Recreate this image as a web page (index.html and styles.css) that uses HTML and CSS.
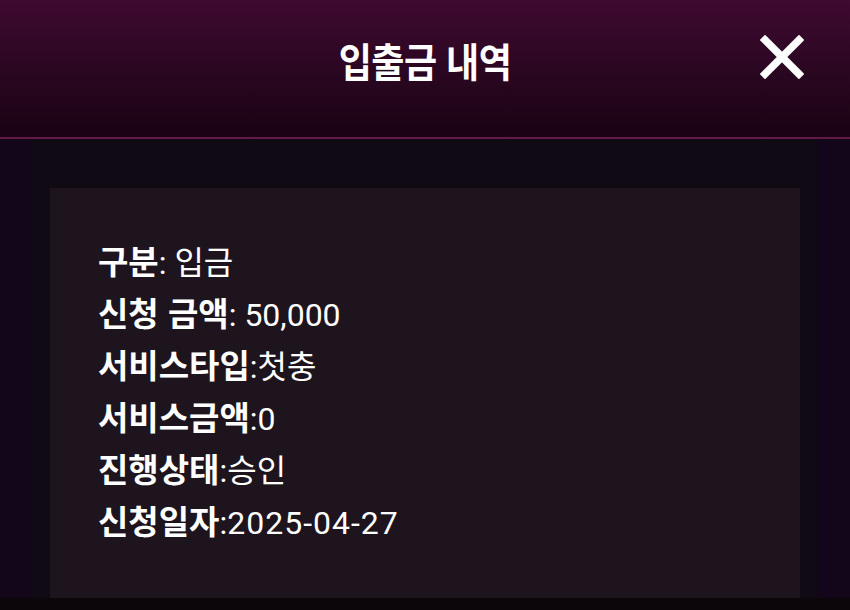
FILE: index.html
```html
<!DOCTYPE html>
<html lang="ko">
<head>
<meta charset="utf-8">
<title>입출금 내역</title>
<link rel="stylesheet" href="styles.css">
</head>
<body>
<div class="modal">
  <header class="modal-head">
    <h1 class="modal-title">입출금 내역</h1>
    <button class="modal-close" type="button" aria-label="닫기">
      <svg viewBox="0 0 44 44" width="44" height="44">
        <path d="M5 5 L39 39 M39 5 L5 39" stroke="#fff" stroke-width="7.5" stroke-linecap="square"/>
      </svg>
    </button>
  </header>
  <main class="modal-body">
    <section class="detail-card">
      <p class="row"><b>구분</b>: 입금</p>
      <p class="row"><b>신청 금액</b>: 50,000</p>
      <p class="row"><b>서비스타입</b>:첫충</p>
      <p class="row"><b>서비스금액</b>:0</p>
      <p class="row"><b>진행상태</b>:승인</p>
      <p class="row"><b>신청일자</b>:<span class="date">2025-04-27</span></p>
    </section>
  </main>
</div>
</body>
</html>
```

FILE: styles.css
```css
html, body {
  margin: 0;
  padding: 0;
  background: #0c0509;
}

body {
  width: 850px;
  height: 610px;
  overflow: hidden;
  font-family: Roboto, "Noto Sans CJK KR", sans-serif;
  color: #fff;
}

.modal {
  display: flex;
  flex-direction: column;
  background: #13051a;
}

.modal-head {
  position: relative;
  height: 137px;
  flex: none;
  display: flex;
  align-items: center;
  justify-content: center;
  background: linear-gradient(to bottom, #3f0a30 0%, #2b0722 50%, #1a0312 100%);
  border-bottom: 2px solid #641848;
}

.modal-title {
  margin: 0 0 20px;
  font-family: "Noto Sans CJK KR", sans-serif;
  font-weight: 700;
  font-size: 36px;
  letter-spacing: -0.5px;
  transform: scaleY(1.12);
}

.modal-close {
  position: absolute;
  right: 46px;
  top: 35px;
  width: 44px;
  height: 44px;
  padding: 0;
  border: 0;
  background: none;
  cursor: pointer;
}

.modal-close svg {
  display: block;
}

.modal-body {
  margin: 0 32px;
  padding: 49px 18px 0;
  background: #0f0a14;
}

.detail-card {
  background: #1e141d;
  padding: 46px 48px 52px;
}

.row {
  margin: 0;
  height: 52px;
  font-size: 32px;
  line-height: 52px;
  white-space: nowrap;
}

.row b {
  font-family: "Noto Sans CJK KR", sans-serif;
  font-weight: 700;
  font-size: 33px;
}

.date {
  letter-spacing: 1px;
}
```
